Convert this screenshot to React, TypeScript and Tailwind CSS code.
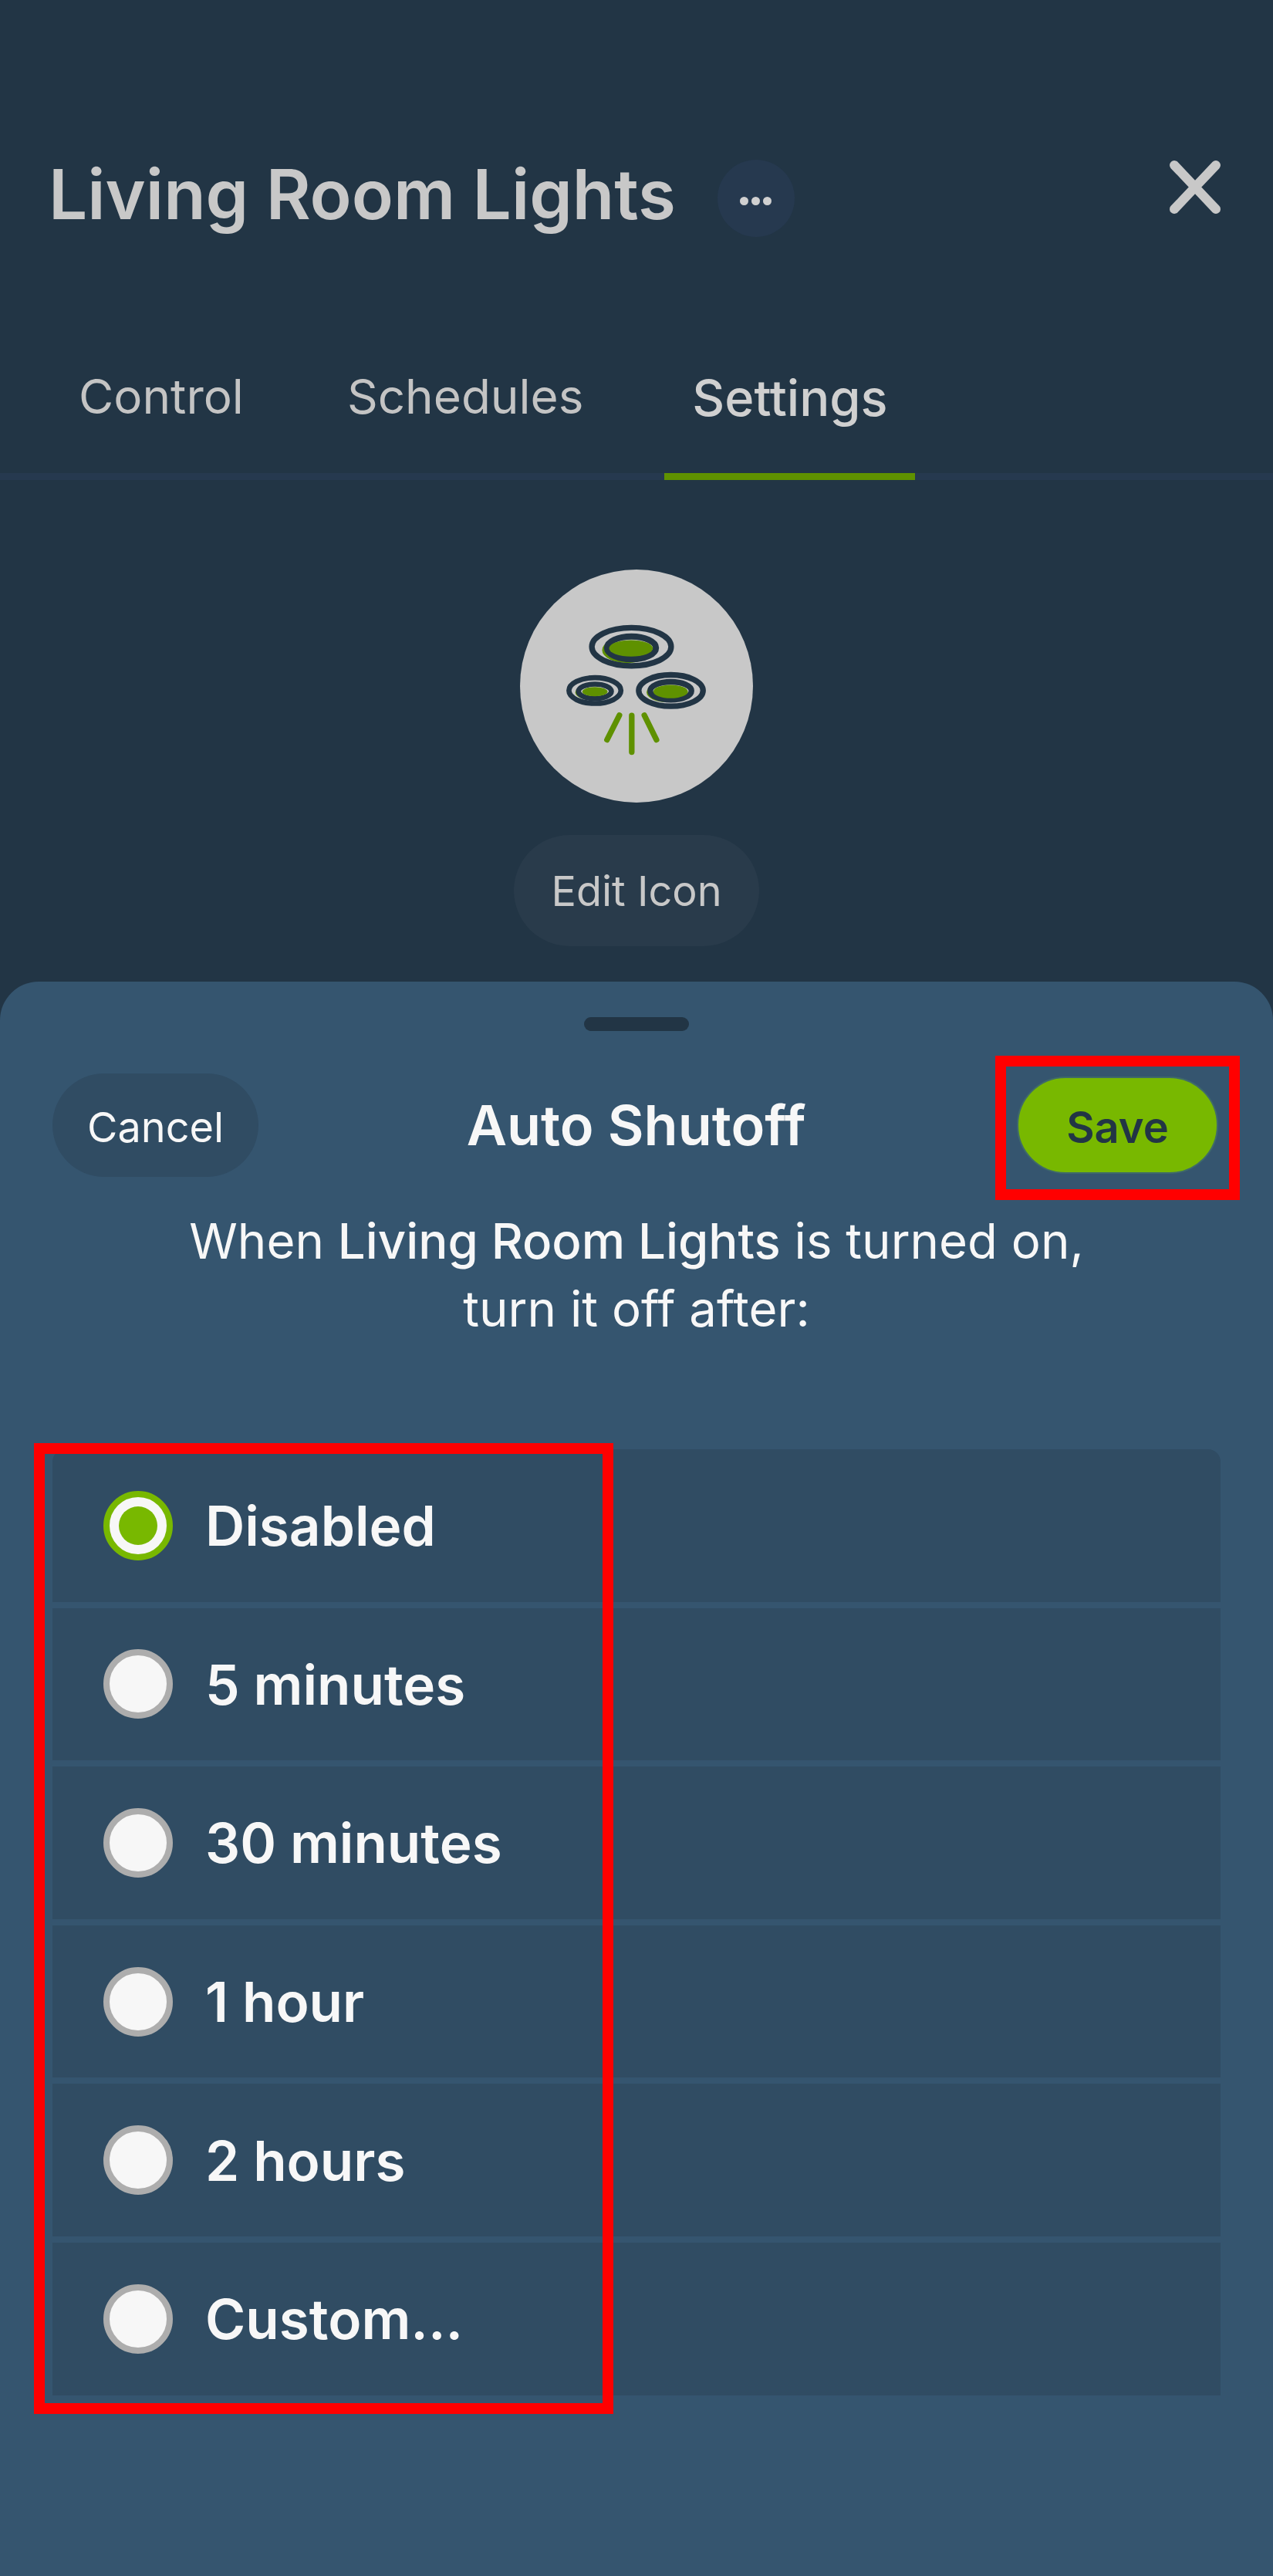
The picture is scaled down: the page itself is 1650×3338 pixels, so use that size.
const options = ["Disabled", "5 minutes", "30 minutes", "1 hour", "2 hours", "Custom..."];

function LightsIcon() {
  return (
    <svg viewBox="105 55 905 905" className="h-full w-full" fill="none">
      <ellipse cx="522" cy="368" rx="98" ry="50" fill="#5f9100" />
      <ellipse cx="538" cy="355" rx="154" ry="74" stroke="#223545" strokeWidth="22" />
      <ellipse cx="538" cy="359" rx="95" ry="44" fill="#c8c8c8" stroke="#223545" strokeWidth="24" />
      <ellipse cx="536" cy="361" rx="85" ry="32" fill="#5f9100" />

      <ellipse cx="385" cy="532" rx="65" ry="30" fill="#5f9100" />
      <ellipse cx="396" cy="525" rx="101" ry="50" stroke="#223545" strokeWidth="20" />
      <ellipse cx="396" cy="528" rx="64" ry="28" fill="#c8c8c8" stroke="#223545" strokeWidth="20" />
      <ellipse cx="396" cy="529" rx="49" ry="18" fill="#5f9100" />

      <ellipse cx="675" cy="532" rx="78" ry="38" fill="#5f9100" />
      <ellipse cx="691" cy="525" rx="125" ry="61" stroke="#223545" strokeWidth="22" />
      <ellipse cx="691" cy="526" rx="80" ry="35" fill="#c8c8c8" stroke="#223545" strokeWidth="22" />
      <ellipse cx="690" cy="529" rx="67" ry="26" fill="#5f9100" />

      <path d="M491 621 L443 716 M539 622 L539 764 M588 621 L635 716" stroke="#5f9100" strokeWidth="22" strokeLinecap="round" />
    </svg>
  );
}

function CloseIcon() {
  return (
    <svg viewBox="0 0 66 69" className="h-[69px] w-[66px]" fill="none">
      <path d="M6 6 L60 63 M60 6 L6 63" stroke="#c8c8c8" strokeWidth="12" strokeLinecap="round" />
    </svg>
  );
}

function OptionRow({ label, checked }: { label: string; checked: boolean }) {
  return (
    <div className="flex h-[197.6px] items-center bg-[#304c63] pl-[66px] first:rounded-t-2xl last:rounded-b-2xl">
      <div
        className={`flex h-[90px] w-[90px] items-center justify-center rounded-full border-[8px] bg-[#f7f7f7] ${
          checked ? "border-[#78b800]" : "border-[#adadad]"
        }`}
      >
        {checked && <div className="h-[50px] w-[50px] rounded-full bg-[#78b800]" />}
      </div>
      <span className="ml-[42px] pt-[2px] text-[71px] leading-none font-semibold text-[#f7f7f7]">{label}</span>
    </div>
  );
}

export default function App() {
  return (
    <div className="flex h-[3338px] w-[1650px] flex-col overflow-hidden bg-[#223545] font-['Inter',sans-serif]">
      <div className="h-[1272px] shrink-0 pt-[207px]">
        <div className="flex h-[100px] items-center pr-[68px] pl-[63px]">
          <h1 className="pb-[12px] text-[89px] leading-none font-semibold text-[#c8c8c8]">Living Room Lights</h1>
          <button className="ml-[54px] flex h-[100px] w-[100px] items-center justify-center gap-[4px] rounded-full bg-[#26394f] pt-[6px]">
            <span className="h-[11px] w-[11px] rounded-full bg-[#d0d0d0]" />
            <span className="h-[11px] w-[11px] rounded-full bg-[#d0d0d0]" />
            <span className="h-[11px] w-[11px] rounded-full bg-[#d0d0d0]" />
          </button>
          <button className="mb-[30px] ml-auto">
            <CloseIcon />
          </button>
        </div>

        <nav className="mt-[165px] flex h-[150px] border-b-[9px] border-[#26394f] pl-[102px]">
          <div className="h-[150px] pt-[11px] text-[62px] leading-none text-[#c4c4c4]">Control</div>
          <div className="ml-[134px] h-[150px] pt-[11px] text-[62px] leading-none text-[#c4c4c4]">Schedules</div>
          <div className="ml-[105px] flex h-[150px] w-[325px] justify-center border-b-[9px] border-[#5f9100] pt-[11px] text-[65px] leading-none font-medium text-[#d0d0d0]">Settings</div>
        </nav>

        <div className="mt-[116px] flex flex-col items-center">
          <div className="h-[302px] w-[302px] rounded-full bg-[#c8c8c8]">
            <LightsIcon />
          </div>
          <button className="mt-[42px] h-[144px] w-[318px] rounded-[72px] bg-[#293b4b] text-[54px] text-[#c8c8c8]">Edit Icon</button>
        </div>
      </div>

      <section className="flex-1 rounded-t-[50px] bg-[#35556f] px-[68px]">
        <div className="mx-auto mt-[46px] h-[18px] w-[136px] rounded-full bg-[#223545]" />

        <div className="mt-[55px] flex h-[134px] items-center justify-between">
          <button className="h-[134px] w-[267px] rounded-[67px] bg-[#304c63] pt-[4px] text-[54px] text-[#f7f7f7]">Cancel</button>
          <h2 className="pr-[4px] text-[72px] leading-none font-semibold text-[#f7f7f7]">Auto Shutoff</h2>
          <div className="relative mr-[3px] flex h-[134px] w-[261px] items-center justify-center">
            <button className="h-[126px] w-[261px] rounded-[63px] border-[2px] border-[#3f6a6a] bg-[#78b800] pt-[6px] text-[56px] font-semibold text-[#223545]">Save</button>
            <div className="absolute -top-[23px] -right-[28px] -bottom-[30px] -left-[28px] border-[14px] border-[#ff0000]" />
          </div>
        </div>

        <p className="mt-[39px] text-center text-[63.5px] leading-[88px] text-[#f7f7f7]">
          When <span className="font-medium">Living Room Lights</span> is turned on,
          <br />
          turn it off after:
        </p>

        <div className="relative mt-[138px] flex flex-col gap-[8px]">
          {options.map((option, i) => (
            <OptionRow key={option} label={option} checked={i === 0} />
          ))}
          <div className="absolute -top-[8px] -bottom-[24px] -left-[24px] w-[751px] border-[14px] border-[#ff0000]" />
        </div>
      </section>
    </div>
  );
}
